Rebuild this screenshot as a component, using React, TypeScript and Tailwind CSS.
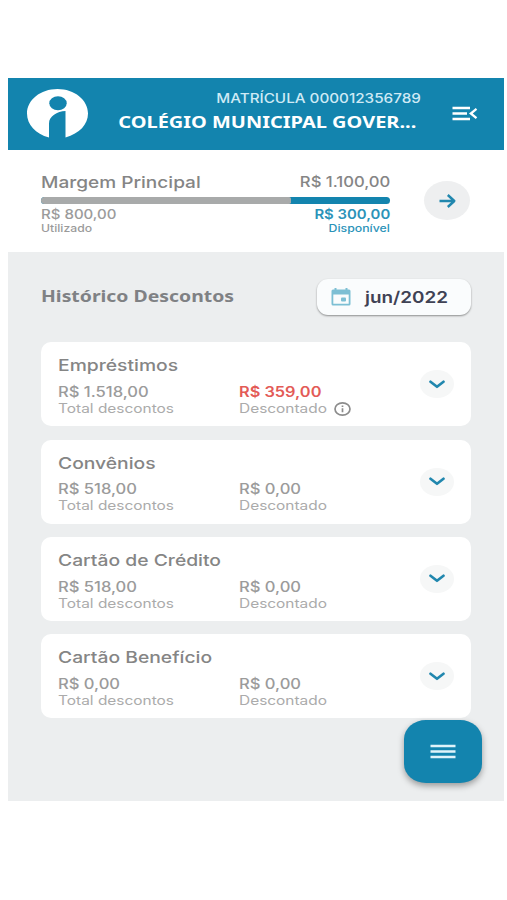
type Discount = {
  id: string;
  title: string;
  total: string;
  discounted: string;
  highlight?: boolean;
};

const discounts: Discount[] = [
  { id: "emprestimos", title: "Empréstimos", total: "R$ 1.518,00", discounted: "R$ 359,00", highlight: true },
  { id: "convenios", title: "Convênios", total: "R$ 518,00", discounted: "R$ 0,00" },
  { id: "credito", title: "Cartão de Crédito", total: "R$ 518,00", discounted: "R$ 0,00" },
  { id: "beneficio", title: "Cartão Benefício", total: "R$ 0,00", discounted: "R$ 0,00" },
];

function Logo() {
  return (
    <svg className="w-[61px] h-[50px]" viewBox="0 0 61 50" fill="none">
      <path
        fill="#ffffff"
        d="M30.5 0C47.5 0 61 11 61 24.500c0 11-8.500 20-22.500 24V22C30 22.500 22 27 22 34.500V48.500C8.500 45 0 35.500 0 24.500 0 11 13.500 0 30.500 0Z"
      />
      <ellipse cx="31" cy="14.300" rx="8.700" ry="7" fill="#1384ae" />
    </svg>
  );
}

function Header() {
  return (
    <header className="h-[72px] bg-[#1384ae] text-white flex items-start pl-[19px] pr-[26px] pt-[11px]">
      <Logo />
      <div className="flex-1 flex flex-col items-end pr-[31px]">
        <span className="text-[12.8px] leading-[20px] font-medium text-[#cfeaf5] whitespace-nowrap origin-right scale-x-[1.19]">
          MATRÍCULA 000012356789
        </span>
        <span className="font-['Noto_Sans'] font-bold text-[16.500px] leading-[24px] mt-px mr-[4px] whitespace-nowrap origin-right scale-x-[1.21]">
          COLÉGIO MUNICIPAL GOVER...
        </span>
      </div>
      <svg className="w-[26px] h-[15px] mt-[17px]" viewBox="0 0 26 15" fill="none" stroke="#ffffff" strokeWidth="2.300">
        <path d="M0.500 2H18M0.500 7.500H15M0.500 13H18M24.500 2.800L18.800 7.500L24.500 12.200" />
      </svg>
    </header>
  );
}

function Margin() {
  return (
    <section className="h-[101.500px] bg-white flex justify-between pl-[33px] pr-[33.500px]">
      <div className="w-[349px] pt-[22px]">
        <div className="flex justify-between h-[25px] leading-5 text-[#858585] font-medium">
          <span className="text-[16.500px] whitespace-nowrap origin-left scale-x-[1.155]">Margem Principal</span>
          <span className="text-[14.400px] whitespace-nowrap origin-right scale-x-[1.155]">R$ 1.100,00</span>
        </div>
        <div className="flex h-[7px] rounded-[4px] bg-[#1384ae]">
          <div className="w-[250px] rounded-l-[4px] rounded-r-[2px] bg-[#a8aaaa]" />
        </div>
        <div className="flex justify-between pt-[3px]">
          <div className="flex flex-col items-start text-[#9b9b9b]">
            <span className="text-[13px] leading-[15px] font-medium whitespace-nowrap origin-left scale-x-[1.155]">R$ 800,00</span>
            <span className="text-[10px] leading-[12px] font-medium whitespace-nowrap origin-left scale-x-[1.22]">Utilizado</span>
          </div>
          <div className="flex flex-col items-end text-[#2b93b9]">
            <span className="text-[13px] leading-[15px] font-semibold whitespace-nowrap origin-right scale-x-[1.145]">R$ 300,00</span>
            <span className="text-[10px] leading-[12px] font-medium whitespace-nowrap origin-right scale-x-[1.23]">Disponível</span>
          </div>
        </div>
      </div>
      <button className="w-[46px] h-[39px] mt-[31px] rounded-[50%] bg-[#eeeff0] flex items-center justify-center">
        <svg className="w-[17px] h-[14px]" viewBox="0 0 17 14" fill="none" stroke="#2187ae" strokeWidth="2.400">
          <path d="M0.500 7H15M8.800 1L15.300 7L8.800 13" strokeLinejoin="round" />
        </svg>
      </button>
    </section>
  );
}

function MonthPicker() {
  return (
    <button className="w-[154px] h-[36px] rounded-[11px] bg-[#fafcfd] shadow-[0_1px_2px_rgba(0,0,0,0.4)] flex items-center pl-[14px]">
      <svg className="w-[20px] h-[18px] shrink-0" viewBox="0 0 20 18" fill="none">
        <path
          fillRule="evenodd"
          fill="#7dbfd4"
          d="M3.500 0H5.500V1.500H14.500V0H16.500V1.500H18Q19.500 1.500 19.500 3V16Q19.500 17.500 18 17.500H2Q0.500 17.500 0.500 16V3Q0.500 1.500 2 1.500H3.500ZM2.300 6.500V15.700H17.700V6.500Z"
        />
        <rect x="10" y="9.500" width="5" height="4" rx="1" fill="#7dbfd4" />
      </svg>
      <span className="ml-[14px] text-[16.500px] leading-5 font-semibold text-[#3f4254] whitespace-nowrap origin-left scale-x-[1.145]">
        jun/2022
      </span>
    </button>
  );
}

function InfoIcon() {
  return (
    <svg className="w-[17px] h-[14px] shrink-0" viewBox="0 0 17 14" fill="none" stroke="#8c8c8c" strokeWidth="1.700">
      <ellipse cx="8.500" cy="7" rx="7.500" ry="6.100" />
      <path d="M8.500 6.200V10.200M8.500 3.600V5" />
    </svg>
  );
}

function DiscountCard({ item }: { item: Discount }) {
  return (
    <div className="h-[84px] rounded-[10px] bg-white flex justify-between pl-[17px] pr-[16.500px] pt-[13px]">
      <div>
        <h3 className="w-fit text-[16px] leading-5 font-medium text-[#858585] whitespace-nowrap origin-left scale-x-[1.205]">
          {item.title}
        </h3>
        <div className="flex pt-[8.700px]">
          <div className="w-[181.500px] flex flex-col items-start">
            <span className="text-[13.800px] leading-[17px] font-medium text-[#9b9b9b] whitespace-nowrap origin-left scale-x-[1.2]">
              {item.total}
            </span>
            <span className="text-[12.500px] leading-[16px] text-[#ababab] whitespace-nowrap origin-left scale-x-[1.235]">
              Total descontos
            </span>
          </div>
          <div className="flex flex-col items-start">
            <span
              className={`text-[13.800px] leading-[17px] whitespace-nowrap origin-left ${
                item.highlight ? "font-semibold text-[#e35b57] scale-x-[1.185]" : "font-medium text-[#9b9b9b] scale-x-[1.2]"
              }`}
            >
              {item.discounted}
            </span>
            <div className="flex items-center h-4">
              <span className="w-[95px] text-[12.500px] leading-[16px] text-[#ababab] whitespace-nowrap">
                <span className="inline-block origin-left scale-x-[1.235]">Descontado</span>
              </span>
              {item.highlight && <InfoIcon />}
            </div>
          </div>
        </div>
      </div>
      <button className="w-[34px] h-[28px] mt-[15px] rounded-[50%] bg-[#f6f7f7] flex items-center justify-center">
        <svg className="w-[16px] h-[9px]" viewBox="0 0 16 9" fill="none" stroke="#2187ae" strokeWidth="2.700">
          <path d="M1.500 1.800L8 6.800L14.500 1.800" strokeLinecap="round" strokeLinejoin="round" />
        </svg>
      </button>
    </div>
  );
}

export default function App() {
  return (
    <div className="w-[507px] h-[900px] bg-white pt-[78px] pl-2 overflow-hidden font-['Inter',sans-serif]">
      <div className="relative w-[495.500px] h-[723px] bg-[#eceeef] flex flex-col">
        <Header />
        <Margin />
        <main className="flex-1 pl-[32.500px] pr-[33px] pt-[27px]">
          <div className="flex justify-between h-[63.800px]">
            <h2 className="font-['Noto_Sans'] font-bold text-[16.500px] leading-[33px] h-[36px] text-[#7f8184] whitespace-nowrap origin-left scale-x-[1.175]">
              Histórico Descontos
            </h2>
            <MonthPicker />
          </div>
          <div className="flex flex-col gap-[13.300px]">
            {discounts.map((item) => (
              <DiscountCard key={item.id} item={item} />
            ))}
          </div>
        </main>

        <button className="absolute right-[21.500px] bottom-[18px] w-[78px] h-[63px] rounded-[22px_/_19px] bg-[#1384ae] shadow-[0_3px_6px_rgba(0,0,0,0.35)] flex items-center justify-center">
          <svg className="w-[26px] h-[15px]" viewBox="0 0 26 15" fill="none" stroke="#dff3fa" strokeWidth="2.400">
            <path d="M0.500 2H25.500M0.500 7.500H25.500M0.500 13H25.500" />
          </svg>
        </button>
      </div>
    </div>
  );
}
